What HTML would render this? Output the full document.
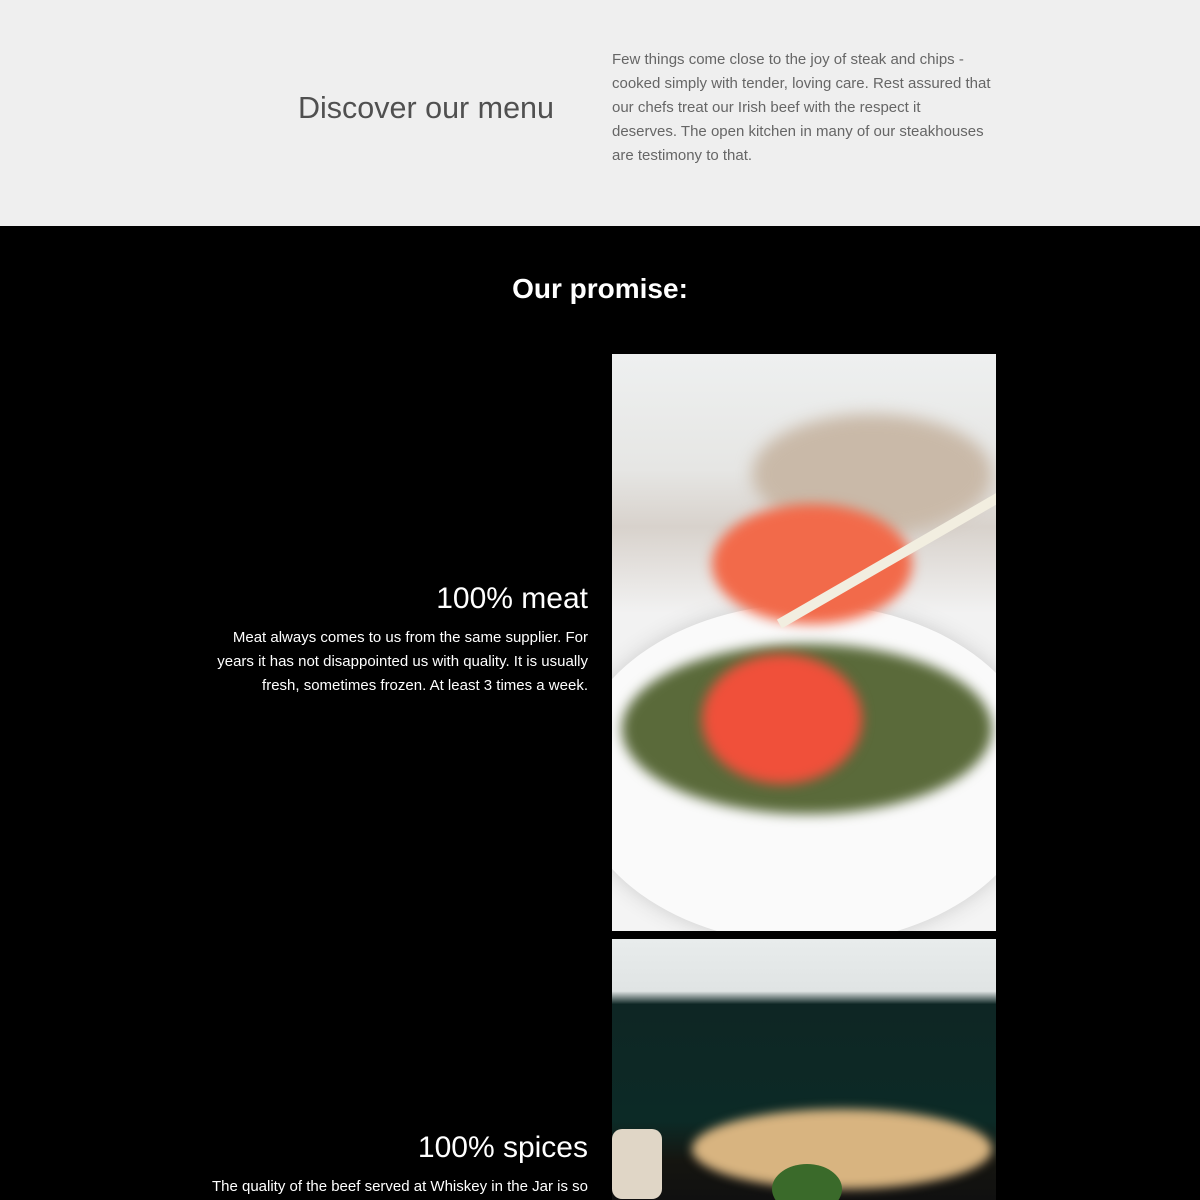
<!DOCTYPE html>
<html><head><meta charset="utf-8"><style>
*{margin:0;padding:0;box-sizing:border-box}
body{width:1200px;height:1200px;overflow:hidden;background:#000;font-family:"Liberation Sans",sans-serif}
.top{position:absolute;left:0;top:0;width:1200px;height:226px;background:#efefef}
.top h2{position:absolute;left:298px;top:91px;font-size:30.5px;font-weight:normal;color:#505050;white-space:nowrap}
.top p{position:absolute;left:612px;top:48px;width:420px;font-size:15px;line-height:24px;color:#666;white-space:nowrap}
.promise{position:absolute;top:273px;width:1200px;text-align:center;color:#fff;font-size:28px;font-weight:bold}
.img1{position:absolute;left:612px;top:354px;width:384px;height:577px;overflow:hidden;
background:linear-gradient(180deg,#eef0f0 0%,#e6e6e4 20%,#d8d2cc 30%,#f2f2f2 45%,#f4f4f4 100%)}
.img2{position:absolute;left:612px;top:939px;width:384px;height:261px;overflow:hidden;
background:linear-gradient(180deg,#e8ecec 0%,#e0e4e4 20%,#0e2624 25%,#0c2a26 70%,#151510 85%,#101010 100%)}
.t{position:absolute;right:612px;width:420px;text-align:right;color:#fff}
.t h3{font-size:30px;font-weight:normal;margin-bottom:10px}
.t p{font-size:15px;line-height:24px;white-space:nowrap}
</style></head><body>
<div class="top">
<h2>Discover our menu</h2>
<p>Few things come close to the joy of steak and chips -<br>cooked simply with tender, loving care. Rest assured that<br>our chefs treat our Irish beef with the respect it<br>deserves. The open kitchen in many of our steakhouses<br>are testimony to that.</p>
</div>
<div class="promise">Our promise:</div>
<div class="img1">
<div style="position:absolute;left:140px;top:60px;width:240px;height:120px;border-radius:50%;background:#c9b9a8;filter:blur(8px)"></div>
<div style="position:absolute;left:-40px;top:250px;width:470px;height:340px;border-radius:50%;background:#fafafa;box-shadow:0 0 20px #ccc"></div>
<div style="position:absolute;left:10px;top:290px;width:370px;height:170px;border-radius:50%;background:#5a6a3a;filter:blur(6px)"></div>
<div style="position:absolute;left:90px;top:300px;width:160px;height:130px;border-radius:50%;background:#f0503a;filter:blur(6px)"></div>
<div style="position:absolute;left:100px;top:150px;width:200px;height:120px;border-radius:50%;background:#f26a4a;filter:blur(6px)"></div>
<div style="position:absolute;left:150px;top:200px;width:260px;height:10px;background:#f2eee0;transform:rotate(-30deg)"></div>
</div>
<div class="img2">
<div style="position:absolute;left:80px;top:170px;width:300px;height:80px;border-radius:50%;background:#d8b480;filter:blur(5px)"></div>
<div style="position:absolute;left:0;top:190px;width:50px;height:70px;background:#e0d6c6;border-radius:10px"></div>
<div style="position:absolute;left:160px;top:225px;width:70px;height:50px;border-radius:50%;background:#3a6a2a"></div>
</div>
<div class="t" style="top:582px"><h3>100% meat</h3><p>Meat always comes to us from the same supplier. For<br>years it has not disappointed us with quality. It is usually<br>fresh, sometimes frozen. At least 3 times a week.</p></div>
<div class="t" style="top:1131px"><h3>100% spices</h3><p>The quality of the beef served at Whiskey in the Jar is so</p></div>
</body></html>
